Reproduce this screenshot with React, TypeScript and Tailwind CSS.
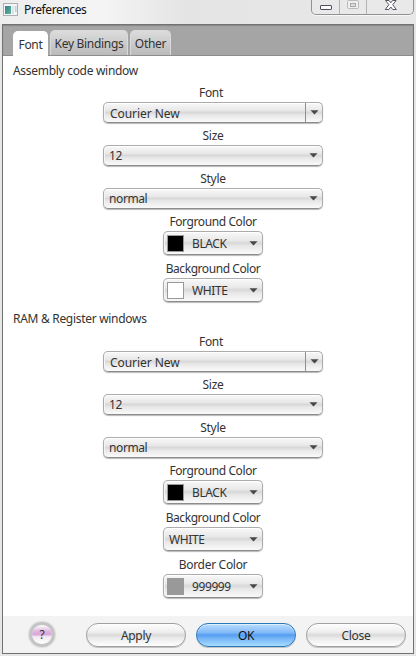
import type { ReactNode } from "react";

const controlFace =
  "rounded-[5px] border border-[#acacac] border-b-[#8c8c8c] shadow-[inset_0_1px_0_#ffffff,inset_1px_0_0_#f4f4f4,0_1px_1px_#b9b9b9] bg-[linear-gradient(#f8f8f8_0%,#e9e9e9_38%,#d8d8d8_50%,#e8e8e8_64%,#fafafa_100%)]";

function Arrow() {
  return (
    <svg className="h-[5px] w-[9px] shrink-0" viewBox="0 0 9 5">
      <path d="M0.5 0.3H8.5L4.5 4.5Z" fill="#484848" />
    </svg>
  );
}

function Label({ children, className }: { children: ReactNode; className: string }) {
  return <div className={`flex items-center justify-center ${className}`}>{children}</div>;
}

function Combo({ value, editable }: { value: string; editable?: boolean }) {
  return (
    <div className={`flex h-[21px] w-[220px] items-center ${controlFace}`}>
      <span className={`flex-1 ${editable ? "pl-[6px] pt-[2px] tracking-[-0.05px]" : "pl-[5px] pt-px tracking-[-0.4px]"}`}>
        {value}
      </span>
      <span
        className={`flex h-full w-[17px] items-center justify-center ${editable ? "border-l border-[#8f8f8f]" : ""}`}
      >
        <Arrow />
      </span>
    </div>
  );
}

function ColorPicker({ value, swatch }: { value: string; swatch?: string }) {
  return (
    <div className={`flex h-6 w-[100px] items-center pl-[3px] pr-1 ${controlFace}`}>
      {swatch ? <span className={`mr-2 h-[17px] w-[17px] border border-[#999] ${swatch}`} /> : null}
      <span className={`flex-1 pt-[2px] tracking-[-0.4px] ${swatch ? "" : "pl-[2px]"}`}>{value}</span>
      <Arrow />
    </div>
  );
}

function FontFields() {
  return (
    <>
      <Combo value="Courier New" editable />
      <Label className="h-[22px] pt-[3px]">Size</Label>
      <Combo value="12" />
      <Label className="h-[22px] pt-[3px]">Style</Label>
      <Combo value="normal" />
      <Label className="h-[22px] pt-[3px] tracking-[-0.4px]">Forground Color</Label>
      <ColorPicker value="BLACK" swatch="bg-black" />
      <Label className="h-[23px] pt-[4px] tracking-[-0.43px]">Background Color</Label>
    </>
  );
}

function PillButton({ children, primary }: { children: ReactNode; primary?: boolean }) {
  return (
    <button
      className={`flex h-6 w-[100px] items-center justify-center rounded-full border pt-[2px] shadow-[inset_0_1px_1px_#ffffff99,0_1px_0_#c4c4c4] ${
        primary
          ? "border-[#2b78b8] bg-[linear-gradient(#b9dcff_0%,#85bbf8_38%,#559df0_50%,#75b5f7_65%,#a8dcff_100%)] text-[#111]"
          : "border-[#a0a0a0] bg-[linear-gradient(#fdfdfd_0%,#eeeeee_38%,#dadada_50%,#ebebeb_65%,#ffffff_100%)]"
      }`}
    >
      {children}
    </button>
  );
}

const tab =
  "flex h-[25px] items-center justify-center rounded-t-[5px] border border-b-0 pt-px";

export default function App() {
  return (
    <div className="flex h-[656px] w-[416px] flex-col overflow-hidden bg-[#e6e6e6] font-['Noto_Sans','Open_Sans',sans-serif] text-[12px] leading-4 tracking-[-0.3px] text-[#333]">
      <header className="flex h-6 shrink-0 items-start bg-[linear-gradient(90deg,#ededed,#f4f4f4_25%,#e4e4e4_45%,#e8e8e8)] pl-[3px]">
        <svg className="mt-[3px] h-[13px] w-[15px]" viewBox="0 0 15 13">
          <defs>
            <linearGradient id="pane" x1="0" y1="0" x2="1" y2="1">
              <stop offset="0" stopColor="#327f8b" />
              <stop offset="1" stopColor="#63b29a" />
            </linearGradient>
          </defs>
          <rect x=".5" y=".5" width="14" height="12" fill="#f5f5f5" stroke="#a8b0b4" />
          <rect x="2" y="3" width="6" height="8" fill="url(#pane)" />
          <rect x="9" y="3" width="2" height="8" fill="#d4e7e4" />
          <rect x="12" y="3" width="1.5" height="6" fill="#b9d2d2" />
        </svg>
        <span className="ml-[6px] mt-[2px] tracking-[-0.4px] text-[#111]">Preferences</span>
        <div className="ml-auto mr-[2px] flex h-[15px] w-[103px] rounded-b-[5px] border border-t-0 border-[#929292] bg-[#e9e9e9] shadow-[0_1px_0_#f6f6f6]">
          <svg className="h-[14px] w-[101px]" viewBox="0 0 101 14">
            <path d="M27.5 0V14M54.5 0V14" stroke="#b3b3b3" />
            <rect x="8.5" y="5.5" width="11" height="4" rx=".5" fill="#fff" stroke="#50505d" />
            <rect x="35.5" y=".5" width="11" height="8" rx="1" fill="#eee" stroke="#bbb" />
            <rect x="38.5" y="3.5" width="5" height="3" fill="#ddd" stroke="#aaa" />
            <path
              d="M73.5 .5H77L78.8 2.8L80.6 .5H84.1L80.7 4.7L84.3 9.5H80.7L78.8 7L76.9 9.5H73.3L76.9 4.7Z"
              fill="#fff"
              stroke="#555562"
            />
          </svg>
        </div>
      </header>

      <main className="ml-[2px] flex h-[630px] w-[412px] flex-col border border-[#727272] bg-white">
        <nav className="flex h-[31px] shrink-0 items-end gap-[2px] border-b border-[#8d8d8d] bg-[#a5a5a5] pl-[10px] shadow-[inset_0_1px_1px_#888]">
          <div className={`-mb-px w-[35px] border-white bg-white ${tab}`}>Font</div>
          <div className={`w-[78px] border-[#dadada] bg-[linear-gradient(#dcdcdc,#bababa)] ${tab}`}>
            Key Bindings
          </div>
          <div className={`w-[41px] border-[#dadada] bg-[linear-gradient(#dcdcdc,#bababa)] ${tab}`}>
            Other
          </div>
        </nav>

        <div className="h-[27px] pl-[10px] pt-[7px]">Assembly code window</div>
        <section className="flex flex-col items-center pl-[10px]">
          <Label className="h-[19px] pr-1">Font</Label>
          <FontFields />
          <ColorPicker value="WHITE" swatch="bg-white" />
        </section>

        <div className="h-[29px] pl-[10px] pt-[9px]">RAM &amp; Register windows</div>
        <section className="flex flex-col items-center pl-[10px]">
          <Label className="h-[20px] pr-1 pt-px">Font</Label>
          <FontFields />
          <ColorPicker value="WHITE" />
          <Label className="h-[23px] pt-[4px]">Border Color</Label>
          <ColorPicker value="999999" swatch="bg-[#999]" />
        </section>

        <footer className="mt-auto flex h-[37px] shrink-0 items-start gap-[10px] bg-[#f3f3f3] pl-[26px] pt-[7px]">
          <button className="-mt-px mr-[21px] flex h-[25px] w-[26px] items-center justify-center rounded-full border-[3px] border-[#c4c4c4] bg-[linear-gradient(#faf4fa_5%,#dfb0df_35%,#d9a8d9_50%,#f4eaf4_62%,#ffffff)] pt-px text-[12px] shadow-[0_0_2px_#aaa,inset_0_0_1px_#fff]">
            ?
          </button>
          <PillButton>Apply</PillButton>
          <PillButton primary>OK</PillButton>
          <PillButton>Close</PillButton>
        </footer>
      </main>
    </div>
  );
}
